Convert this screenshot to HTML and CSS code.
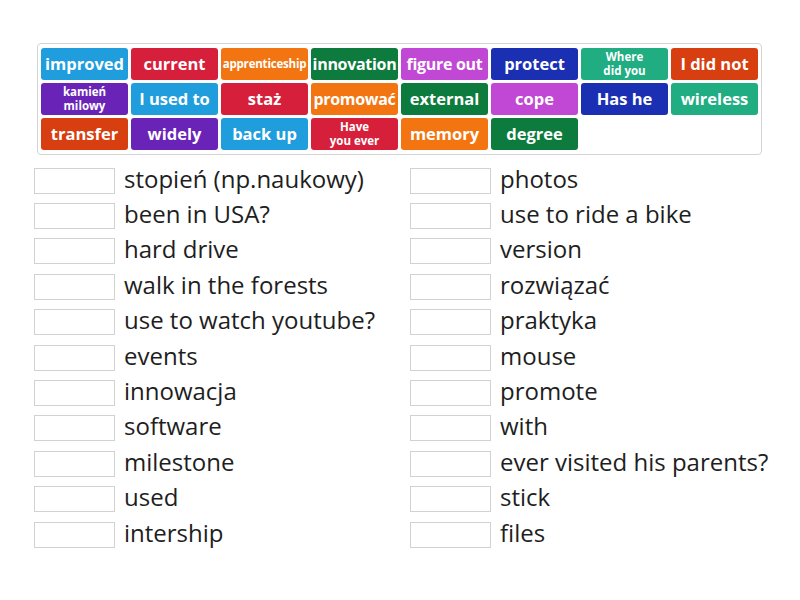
FILE: index.html
```html
<!DOCTYPE html>
<html lang="pl">
<head>
    <meta charset="UTF-8">
    <title>Match up</title>
    <link rel="stylesheet" href="styles.css">
</head>
<body>
    <!-- Word bank -->
    <div class="bank">
        <div class="tile c1">improved</div>
        <div class="tile c2">current</div>
        <div class="tile c3 tiny">apprenticeship</div>
        <div class="tile c4 snug">innovation</div>
        <div class="tile c5 snug">figure out</div>
        <div class="tile c6">protect</div>
        <div class="tile c7 two">Where<br>did you</div>
        <div class="tile c8">I did not</div>

        <div class="tile c9 two">kamień<br>milowy</div>
        <div class="tile c1">I used to</div>
        <div class="tile c2">staż</div>
        <div class="tile c3 snug">promować</div>
        <div class="tile c4">external</div>
        <div class="tile c5">cope</div>
        <div class="tile c6">Has he</div>
        <div class="tile c7">wireless</div>

        <div class="tile c8">transfer</div>
        <div class="tile c9">widely</div>
        <div class="tile c1">back up</div>
        <div class="tile c2 two">Have<br>you ever</div>
        <div class="tile c3">memory</div>
        <div class="tile c4">degree</div>
    </div>

    <!-- Targets -->
    <div class="targets">
        <div class="row"><span class="slot"></span><span class="word">stopień (np.naukowy)</span></div>
        <div class="row"><span class="slot"></span><span class="word">photos</span></div>
        <div class="row"><span class="slot"></span><span class="word">been in USA?</span></div>
        <div class="row"><span class="slot"></span><span class="word">use to ride a bike</span></div>
        <div class="row"><span class="slot"></span><span class="word">hard drive</span></div>
        <div class="row"><span class="slot"></span><span class="word">version</span></div>
        <div class="row"><span class="slot"></span><span class="word">walk in the forests</span></div>
        <div class="row"><span class="slot"></span><span class="word">rozwiązać</span></div>
        <div class="row"><span class="slot"></span><span class="word">use to watch youtube?</span></div>
        <div class="row"><span class="slot"></span><span class="word">praktyka</span></div>
        <div class="row"><span class="slot"></span><span class="word">events</span></div>
        <div class="row"><span class="slot"></span><span class="word">mouse</span></div>
        <div class="row"><span class="slot"></span><span class="word">innowacja</span></div>
        <div class="row"><span class="slot"></span><span class="word">promote</span></div>
        <div class="row"><span class="slot"></span><span class="word">software</span></div>
        <div class="row"><span class="slot"></span><span class="word">with</span></div>
        <div class="row"><span class="slot"></span><span class="word">milestone</span></div>
        <div class="row"><span class="slot"></span><span class="word">ever visited his parents?</span></div>
        <div class="row"><span class="slot"></span><span class="word">used</span></div>
        <div class="row"><span class="slot"></span><span class="word">stick</span></div>
        <div class="row"><span class="slot"></span><span class="word">intership</span></div>
        <div class="row"><span class="slot"></span><span class="word">files</span></div>
    </div>
</body>
</html>
```

FILE: styles.css
```css
body {
    margin: 0;
    background: #fff;
    font-family: "Open Sans", "Noto Sans", Arial, sans-serif;
}
.bank {
    width: 725px;
    box-sizing: border-box;
    margin: 43px 0 0 37px;
    padding: 4px 3px;
    border: 1px solid #d4d4d4;
    border-radius: 4px;
    display: grid;
    grid-template-columns: repeat(8, 87px);
    grid-auto-rows: 32px;
    gap: 3px;
}
.tile {
    border-radius: 3px;
    color: #fff;
    font-weight: bold;
    font-size: 16.5px;
    display: flex;
    align-items: center;
    justify-content: center;
    text-align: center;
    white-space: nowrap;
    padding-bottom: 1px;
    box-sizing: border-box;
}
.tile.snug {
    font-size: 16px;
    letter-spacing: -0.3px;
}
.tile.tiny {
    font-size: 11.5px;
    letter-spacing: -0.2px;
}
.tile.two {
    font-size: 11.5px;
    line-height: 14px;
}
.c1 { background: #1f9ddd; }
.c2 { background: #d6203b; }
.c3 { background: #f27512; }
.c4 { background: #0c7b3d; }
.c5 { background: #c148d4; }
.c6 { background: #1b2fb2; }
.c7 { background: #20ad82; }
.c8 { background: #d73e10; }
.c9 { background: #6a23b7; }

.targets {
    margin: 8px 0 0 34px;
    display: grid;
    grid-template-columns: 376px 376px;
    grid-auto-rows: 35.4px;
}
.row {
    display: flex;
    align-items: center;
}
.slot {
    width: 81px;
    height: 26px;
    box-sizing: border-box;
    border: 1px solid #d2d2d2;
    margin-right: 9px;
    flex-shrink: 0;
}
.word {
    font-size: 24px;
    line-height: 26px;
    color: #1e1e1e;
    white-space: nowrap;
    margin-top: -4px;
}
```
